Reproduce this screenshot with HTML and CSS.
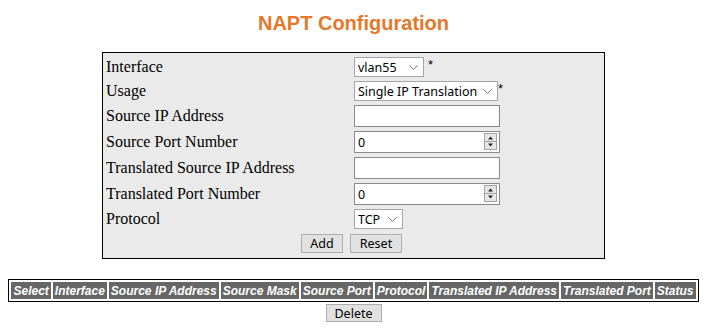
FILE: index.html
```html
<!DOCTYPE html>
<html lang="en">
<head>
    <meta charset="UTF-8">
    <title>NAPT Configuration</title>
    <link rel="stylesheet" href="styles.css">
</head>
<body>
    <div class="title">NAPT Configuration</div>
    <form class="napt-form">
        <table class="form-table">
            <tr class="r-sel">
                <td class="label">Interface</td>
                <td><select class="sel sel-if"><option>vlan55</option></select> <span class="req">*</span></td>
            </tr>
            <tr class="r-sel">
                <td class="label">Usage</td>
                <td><select class="sel sel-usage"><option>Single IP Translation</option></select><span class="req">*</span></td>
            </tr>
            <tr class="r-in">
                <td class="label">Source IP Address</td>
                <td><input type="text" class="txt"></td>
            </tr>
            <tr class="r-in">
                <td class="label">Source Port Number</td>
                <td>
                    <span class="spin-wrap">
                        <input type="text" class="txt" value="0">
                        <span class="spinner">
                            <svg width="13" height="17" viewBox="0 0 13 17">
                                <rect x="0.5" y="0.5" width="12" height="16" fill="#e6e6e6" stroke="#a3a3a3"/>
                                <line x1="1" y1="8.5" x2="12" y2="8.5" stroke="#a3a3a3"/>
                                <path d="M4 6.5 L9 6.5 L6.5 3.5 Z" fill="#222"/>
                                <path d="M4 10.5 L9 10.5 L6.5 13.5 Z" fill="#222"/>
                            </svg>
                        </span>
                    </span>
                </td>
            </tr>
            <tr class="r-in">
                <td class="label">Translated Source IP Address</td>
                <td><input type="text" class="txt"></td>
            </tr>
            <tr class="r-in">
                <td class="label">Translated Port Number</td>
                <td>
                    <span class="spin-wrap">
                        <input type="text" class="txt" value="0">
                        <span class="spinner">
                            <svg width="13" height="17" viewBox="0 0 13 17">
                                <rect x="0.5" y="0.5" width="12" height="16" fill="#e6e6e6" stroke="#a3a3a3"/>
                                <line x1="1" y1="8.5" x2="12" y2="8.5" stroke="#a3a3a3"/>
                                <path d="M4 6.5 L9 6.5 L6.5 3.5 Z" fill="#222"/>
                                <path d="M4 10.5 L9 10.5 L6.5 13.5 Z" fill="#222"/>
                            </svg>
                        </span>
                    </span>
                </td>
            </tr>
            <tr class="r-sel">
                <td class="label">Protocol</td>
                <td><select class="sel sel-proto"><option>TCP</option></select></td>
            </tr>
            <tr class="r-sel">
                <td colspan="2" class="buttons form-buttons">
                    <button type="button" class="btn btn-add">Add</button><button type="button" class="btn btn-reset">Reset</button>
                </td>
            </tr>
        </table>
    </form>

    <div class="list-wrap">
        <table class="list-table">
            <tr>
                <th>Select</th>
                <th>Interface</th>
                <th>Source IP Address</th>
                <th>Source Mask</th>
                <th>Source Port</th>
                <th>Protocol</th>
                <th>Translated IP Address</th>
                <th>Translated Port</th>
                <th>Status</th>
            </tr>
        </table>
    </div>
    <div class="buttons">
        <button type="button" class="btn btn-delete">Delete</button>
    </div>
</body>
</html>
```

FILE: styles.css
```css
body {
    margin: 8px;
    font-family: "Liberation Serif", serif;
    background-color: #fff;
}
.title {
    text-align: center;
    font-family: "Liberation Sans", Arial, sans-serif;
    font-weight: bold;
    font-size: 20px;
    color: #e5782a;
    padding-top: 4px;
    height: 40px;
}
.napt-form {
    margin: 0 0 0 94px;
}
.form-table {
    width: 503px;
    border: 1px solid #000;
    background-color: #ebeaea;
    border-collapse: separate;
    border-spacing: 0;
    padding: 2px 0 3px 0;
}
.form-table td {
    padding: 0 3px;
    font-size: 16px;
    vertical-align: middle;
}
.r-sel td {
    height: 24px;
}
.r-in td {
    height: 26px;
}
.form-table td.label {
    width: 242px;
}
.req {
    font-family: "Liberation Sans", Arial, sans-serif;
    font-size: 13px;
    vertical-align: top;
}
select, input, .btn {
    font-family: "Noto Sans", "DejaVu Sans", sans-serif;
    font-size: 12.5px;
    color: #000;
    box-sizing: border-box;
    vertical-align: middle;
}
.sel {
    appearance: none;
    -webkit-appearance: none;
    height: 20px;
    border: 1px solid #a6a6a6;
    background-color: #fff;
    background-image: url("data:image/svg+xml;utf8,<svg xmlns='http://www.w3.org/2000/svg' width='9' height='5' viewBox='0 0 9 5'><path d='M0.5 0.5 L4.5 4.5 L8.5 0.5' fill='none' stroke='%23777' stroke-width='1'/></svg>");
    background-repeat: no-repeat;
    background-position: right 5px center;
    padding: 0 16px 0 3px;
    border-radius: 0;
}
.sel-if {
    width: 70px;
}
.sel-usage {
    width: 144px;
}
.sel-proto {
    width: 49px;
}
.txt {
    width: 146px;
    height: 22px;
    border: 1px solid #8a8a8a;
    padding: 1px 3px;
    background-color: #fff;
}
.spin-wrap {
    position: relative;
    display: inline-block;
}
.spinner {
    position: absolute;
    right: 3px;
    top: 2px;
    line-height: 0;
}
.buttons {
    text-align: center;
}
.form-table td.form-buttons {
    padding: 0 7px 0 3px;
}
.btn {
    background-color: #e1e1e1;
    border: 1px solid #adadad;
    padding: 0;
    height: 19px;
    margin: 0;
}
.btn-add {
    width: 42px;
    margin-right: 7px;
}
.btn-reset {
    width: 52px;
}
.btn-delete {
    width: 56px;
    height: 18px;
    margin-top: 1px;
}
.list-wrap {
    margin: 20px -8px 0 -8px;
}
.list-table {
    margin: 0 auto;
    border: 1px solid #000;
    border-spacing: 2px;
}
.list-table th {
    background-color: #666;
    color: #fff;
    font-family: "Liberation Sans", Arial, sans-serif;
    font-size: 12px;
    font-style: italic;
    font-weight: bold;
    padding: 1px 2px 1px 2px;
    height: 15px;
    white-space: nowrap;
}
```
